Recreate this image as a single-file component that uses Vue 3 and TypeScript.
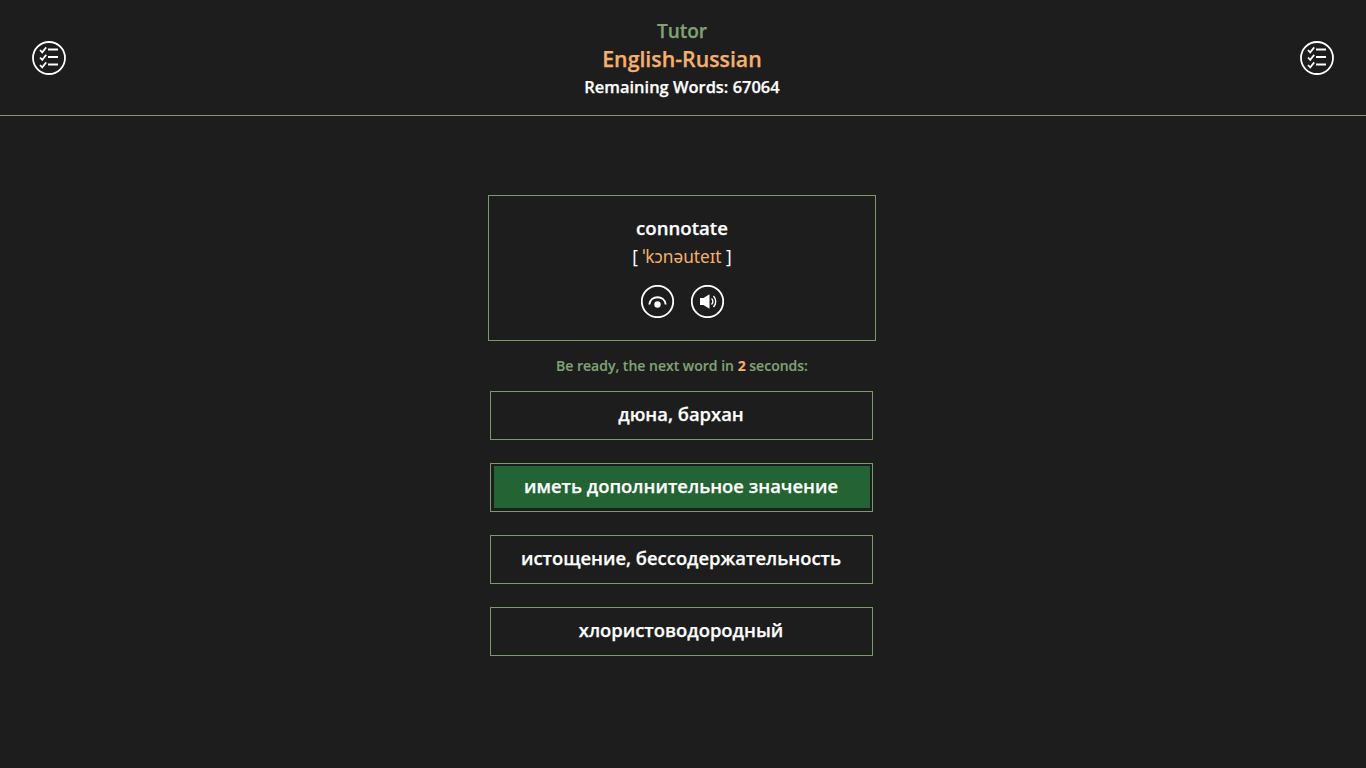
<template>
  <div class="page">
    <header class="top-bar">
      <button class="round-btn" aria-label="Word lists">
        <svg viewBox="0 0 34 34" width="34" height="34">
          <circle cx="17" cy="17" r="16" class="ring" />
          <path v-for="y in listRows" :key="y" :d="`M8 ${y}l2.200 2.400 4-5`" class="line" />
          <path v-for="y in listRows" :key="'b' + y" :d="`M16 ${y - 0.500}h10`" class="line thick" />
        </svg>
      </button>
      <div class="titles">
        <div class="app-name">Tutor</div>
        <div class="course">English-Russian</div>
        <div class="remaining">Remaining Words: {{ remaining }}</div>
      </div>
      <button class="round-btn" aria-label="Word lists">
        <svg viewBox="0 0 34 34" width="34" height="34">
          <circle cx="17" cy="17" r="16" class="ring" />
          <path v-for="y in listRows" :key="y" :d="`M8 ${y}l2.200 2.400 4-5`" class="line" />
          <path v-for="y in listRows" :key="'b' + y" :d="`M16 ${y - 0.500}h10`" class="line thick" />
        </svg>
      </button>
    </header>

    <main class="content">
      <section class="word-card">
        <div class="word">connotate</div>
        <div class="transcription">[ <span>ˈkɔnəuteɪt</span> ]</div>
        <div class="word-actions">
          <svg viewBox="0 0 33 33" width="33" height="33">
            <circle cx="16.500" cy="16.500" r="15.700" class="ring" />
            <path d="M8.300 19.500C9.500 9.800 23.500 9.800 24.700 19.500" class="line arc" />
            <circle cx="16.500" cy="19.500" r="3.200" class="dot" />
          </svg>
          <svg viewBox="0 0 33 33" width="33" height="33">
            <circle cx="16.500" cy="16.500" r="15.700" class="ring" />
            <path d="M9 13h3.500l6-3.700v14.400l-6-3.700H9z" class="dot" />
            <path d="M20.500 13.500a4 4 0 0 1 0 6M22.500 11a8 8 0 0 1 0 11" class="line sound" />
          </svg>
        </div>
      </section>

      <p class="countdown">Be ready, the next word in <b>{{ seconds }}</b> seconds:</p>

      <div class="answers">
        <button
          v-for="answer in answers"
          :key="answer.text"
          class="answer"
          :class="{ correct: answer.correct }"
        >
          <span>{{ answer.text }}</span>
        </button>
      </div>
    </main>
  </div>
</template>

<script setup lang="ts">
const remaining = 67064;
const seconds = 2;
const listRows = [9, 16.500, 24];

const answers = [
  { text: "дюна, бархан", correct: false },
  { text: "иметь дополнительное значение", correct: true },
  { text: "истощение, бессодержательность", correct: false },
  { text: "хлористоводородный", correct: false },
];
</script>

<style>
html,
body {
  background: #1d1d1d;
}
</style>

<style scoped>
.page {
  height: 768px;
  background: #1d1d1d;
  color: #fff;
  font-family: "Open Sans", "Noto Sans", sans-serif;
  font-weight: 600;
  -webkit-text-stroke: 0.250px currentColor;
  overflow: hidden;
}

.top-bar {
  height: 115px;
  border-bottom: 1px solid #84937d;
  display: flex;
  align-items: center;
  justify-content: space-between;
  padding: 0 32px;
}

.round-btn {
  width: 34px;
  height: 34px;
  padding: 0;
  border: 0;
  background: none;
  display: block;
}

.round-btn svg,
.word-actions svg {
  display: block;
}

.ring {
  fill: none;
  stroke: #fff;
  stroke-width: 1.800;
}

.line {
  fill: none;
  stroke: #fff;
  stroke-width: 1.700;
}

.line.thick {
  stroke-width: 2;
}

.line.arc {
  stroke-width: 2;
}

.line.sound {
  stroke-width: 1.400;
}

.dot {
  fill: #fff;
}

.titles {
  text-align: center;
  margin-top: 3px;
  margin-right: 2px;
}

.app-name {
  font-size: 19px;
  line-height: 26px;
  color: #7fa372;
}

.course {
  font-size: 21.300px;
  line-height: 30px;
  color: #f4b06f;
}

.remaining {
  font-size: 16.450px;
  line-height: 26px;
}

.content {
  display: flex;
  flex-direction: column;
  align-items: center;
  padding-top: 79px;
  padding-right: 2px;
}

.word-card {
  width: 388px;
  height: 146px;
  box-sizing: border-box;
  border: 1px solid #789b6c;
  text-align: center;
  padding-top: 19px;
}

.word {
  font-size: 18.600px;
  line-height: 26px;
}

.transcription {
  font-family: "Noto Sans", "DejaVu Sans", sans-serif;
  font-weight: 400;
  -webkit-text-stroke: 0;
  font-size: 17.300px;
  line-height: 24px;
  margin-top: 4px;
}

.transcription span {
  color: #f4b06f;
}

.word-actions {
  display: flex;
  justify-content: center;
  gap: 17px;
  margin-top: 16px;
}

.countdown {
  margin: 15px 0 0;
  font-size: 14px;
  line-height: 19px;
  color: #7fa372;
  -webkit-text-stroke: 0.150px currentColor;
}

.countdown b {
  font-weight: 700;
  color: #f4b06f;
}

.answers {
  margin-top: 16px;
  margin-right: 1px;
  display: flex;
  flex-direction: column;
  gap: 23px;
}

.answer {
  width: 383px;
  height: 49px;
  box-sizing: border-box;
  padding: 2px 2px 3px 3px;
  border: 1px solid #789b6c;
  background: none;
  color: #fff;
  font: inherit;
  font-size: 18.400px;
  display: block;
}

.answer span {
  display: flex;
  align-items: center;
  justify-content: center;
  height: 100%;
  padding: 0 2px 4px 0;
  box-sizing: border-box;
}

.answer.correct span {
  background: #246333;
}
</style>
